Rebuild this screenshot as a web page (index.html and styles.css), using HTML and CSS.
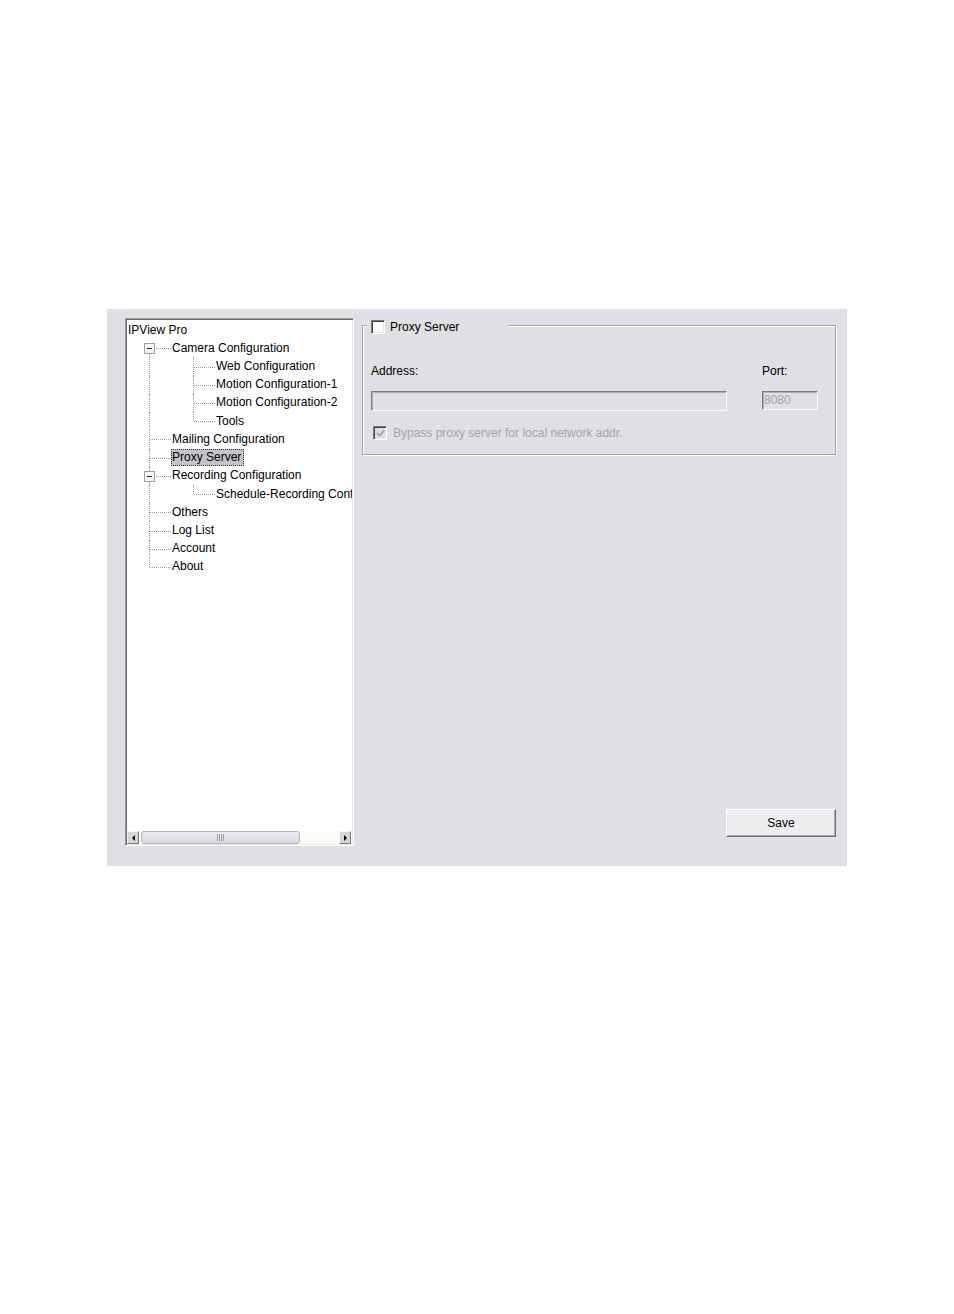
FILE: index.html
```html
<!DOCTYPE html>
<html>
<head>
<meta charset="utf-8">
<link rel="stylesheet" href="styles.css">
</head>
<body>
<div class="panel">
  <div class="tree">
    <div class="tree-list">
      <div class="row"><span class="label">IPView Pro</span></div>
      <div class="row"><span class="cell first"><span class="box"></span></span><span class="label">Camera Configuration</span></div>
      <div class="row"><span class="cell pipe"></span><span class="cell tee"></span><span class="label">Web Configuration</span></div>
      <div class="row"><span class="cell pipe"></span><span class="cell tee"></span><span class="label">Motion Configuration-1</span></div>
      <div class="row"><span class="cell pipe"></span><span class="cell tee"></span><span class="label">Motion Configuration-2</span></div>
      <div class="row"><span class="cell pipe"></span><span class="cell ell"></span><span class="label">Tools</span></div>
      <div class="row"><span class="cell tee"></span><span class="label">Mailing Configuration</span></div>
      <div class="row"><span class="cell tee"></span><span class="label selected">Proxy Server</span></div>
      <div class="row"><span class="cell tee"><span class="box"></span></span><span class="label">Recording Configuration</span></div>
      <div class="row"><span class="cell pipe"></span><span class="cell ell"></span><span class="label">Schedule-Recording Configuration</span></div>
      <div class="row"><span class="cell tee"></span><span class="label">Others</span></div>
      <div class="row"><span class="cell tee"></span><span class="label">Log List</span></div>
      <div class="row"><span class="cell tee"></span><span class="label">Account</span></div>
      <div class="row"><span class="cell ell"></span><span class="label">About</span></div>
    </div>
    <div class="hscroll">
      <span class="sbtn"><span class="arr-left"></span></span>
      <span class="thumb"><span class="grip"></span></span>
      <span class="track"></span>
      <span class="sbtn"><span class="arr-right"></span></span>
    </div>
  </div>
  <div class="right">
    <div class="group">
      <div class="legend"><span class="chk"></span><span class="legend-text">Proxy Server</span></div>
      <div class="fields">
        <div class="field addr">
          <div class="flabel">Address:</div>
          <div class="input wide"></div>
        </div>
        <div class="field port">
          <div class="flabel">Port:</div>
          <div class="input narrow">8080</div>
        </div>
      </div>
      <div class="bypass">
        <span class="chk disabled"><svg width="9" height="9" viewBox="0 0 9 9"><path d="M1 4 L3.5 6.5 L8 1.5" fill="none" stroke="#a8a8a8" stroke-width="2"/></svg></span>
        <span class="bypass-text">Bypass proxy server for local network addr.</span>
      </div>
    </div>
    <button class="save">Save</button>
  </div>
</div>
</body>
</html>
```
FILE: styles.css
```css
html, body {
  margin: 0;
  padding: 0;
  background: #ffffff;
}
body {
  height: 1314px;
  font-family: "Liberation Sans", Arial, sans-serif;
  font-size: 12px;
  color: #000;
}
.panel {
  margin-top: 309px;
  margin-left: 107px;
  width: 740px;
  height: 557px;
  box-sizing: border-box;
  background: #e0dfe3;
  display: flex;
  gap: 8px;
  padding: 9px 11px 20px 18px;
}
.tree {
  width: 229px;
  height: 528px;
  box-sizing: border-box;
  background: #ffffff;
  border: 1px solid;
  border-color: #9c9c9c #ffffff #ffffff #9c9c9c;
  box-shadow: inset 1px 1px 0 #6a6a6a, inset -1px -1px 0 #eeede5;
  padding: 1px;
  display: flex;
  flex-direction: column;
  overflow: hidden;
}
.tree-list {
  flex: 1;
  overflow: hidden;
  white-space: nowrap;
  padding-top: 1px;
}
.row {
  height: 18.23px;
  display: flex;
  align-items: stretch;
}
.cell {
  position: relative;
  flex: 0 0 44px;
  width: 44px;
}
.cell::before, .cell::after {
  content: "";
  position: absolute;
}
.pipe::before, .tee::before {
  left: 22px; top: 0; bottom: 0;
  border-left: 1px dotted #9a9a9a;
}
.ell::before {
  left: 22px; top: 0; height: 50%;
  border-left: 1px dotted #9a9a9a;
}
.first::before {
  left: 22px; top: 50%; bottom: 0;
  border-left: 1px dotted #9a9a9a;
}
.tee::after, .ell::after, .first::after {
  left: 23px; right: 0; top: 50%;
  border-top: 1px dotted #9a9a9a;
}
.box {
  position: absolute;
  left: 17px;
  top: calc(50% - 5px);
  width: 9px;
  height: 9px;
  border: 1px solid #9aa0a8;
  background: #f4f4f0;
  z-index: 1;
}
.box::after {
  content: "";
  position: absolute;
  left: 2px;
  top: 4px;
  width: 5px;
  height: 1px;
  background: #222;
}
.label {
  align-self: center;
  border: 1px solid transparent;
  padding: 0;
  line-height: 15px;
}
.label.selected {
  background: #c4c3cc;
  border: 1px dotted #333;
  padding-right: 2px;
}
.hscroll {
  height: 13px;
  display: flex;
  align-items: stretch;
  background: #fbfbf8;
}
.sbtn {
  width: 12px;
  box-sizing: border-box;
  border: 1px solid;
  border-color: #f5f5f5 #7a7a7a #7a7a7a #f5f5f5;
  background: #d6d5d9;
  display: flex;
  align-items: center;
  justify-content: center;
  margin: 0 1px 0 0;
}
.arr-left {
  width: 0; height: 0;
  border-top: 3px solid transparent;
  border-bottom: 3px solid transparent;
  border-right: 3px solid #000;
}
.arr-right {
  width: 0; height: 0;
  border-top: 3px solid transparent;
  border-bottom: 3px solid transparent;
  border-left: 3px solid #000;
}
.thumb {
  width: 159px;
  box-sizing: border-box;
  margin-left: 1px;
  border: 1px solid #b2b2c0;
  border-radius: 3px;
  background: linear-gradient(#ececf2, #d8d8e2);
  display: flex;
  align-items: center;
  justify-content: center;
}
.grip {
  width: 7px;
  height: 7px;
  background: repeating-linear-gradient(90deg, #9a9aa8 0 1px, transparent 1px 2px);
}
.track {
  flex: 1;
}
.right {
  width: 474px;
  display: flex;
  flex-direction: column;
  padding-top: 7px;
}
.group {
  position: relative;
  height: 130px;
  box-sizing: border-box;
  border: 1px solid #a3a3a3;
  box-shadow: 1px 1px 0 #ffffff, inset 1px 1px 0 #ffffff;
  padding: 38px 0 0 8px;
}
.legend {
  position: absolute;
  left: 4px;
  top: -6px;
  width: 142px;
  height: 14px;
  background: #e0dfe3;
  display: flex;
  align-items: center;
  padding-left: 4px;
  box-sizing: border-box;
}
.chk {
  width: 14px;
  height: 14px;
  box-sizing: border-box;
  flex: 0 0 14px;
  background: #ffffff;
  border: 1px solid;
  border-color: #7a7a7a #ffffff #ffffff #7a7a7a;
  box-shadow: inset 1px 1px 0 #404040, inset -1px -1px 0 #e6e5e0;
  display: flex;
  align-items: center;
  justify-content: center;
}
.chk.disabled {
  background: #e0dfe3;
}
.legend-text {
  margin-left: 5px;
  white-space: nowrap;
}
.fields {
  display: flex;
  gap: 35px;
}
.flabel {
  height: 14px;
  line-height: 14px;
}
.input {
  margin-top: 13px;
  box-sizing: border-box;
  border: 1px solid;
  border-color: #7d7d7d #fafaf6 #fafaf6 #7d7d7d;
  box-shadow: inset 1px 1px 0 #b0b0b0;
  background: #e0dfe3;
  color: #a3a3a3;
  line-height: 16px;
  padding-left: 1px;
}
.wide {
  width: 356px;
  height: 20px;
}
.narrow {
  width: 56px;
  height: 19px;
}
.bypass {
  display: flex;
  align-items: center;
  margin-top: 15px;
  margin-left: 2px;
}
.bypass-text {
  margin-left: 6px;
  color: #a5a5a5;
  white-space: nowrap;
}
.save {
  margin-top: auto;
  margin-bottom: 9px;
  align-self: flex-end;
  width: 110px;
  height: 28px;
  font-family: "Liberation Sans", Arial, sans-serif;
  font-size: 12px;
  color: #000;
  background: #eeeef0;
  border: 1px solid;
  border-color: #ffffff #6f6f6f #6f6f6f #ffffff;
  box-shadow: inset -1px -1px 0 #a8a8a8;
  padding: 0;
}
```
